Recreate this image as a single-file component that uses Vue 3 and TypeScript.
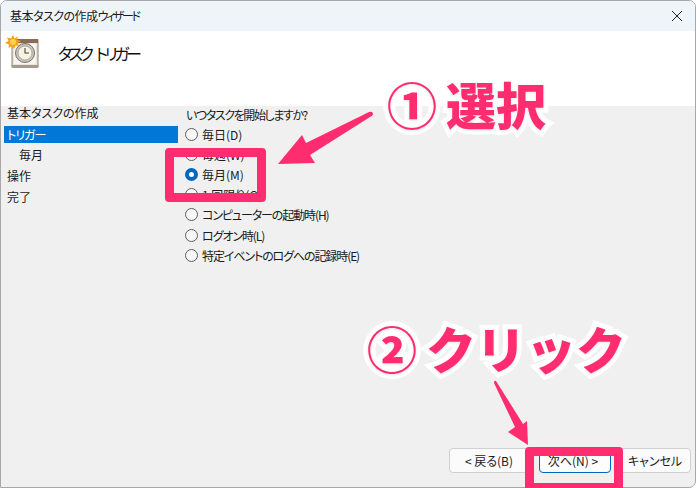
<script setup lang="ts">
const steps = [
  { label: '基本タスクの作成', cls: '' },
  { label: 'トリガー', cls: 'selected' },
  { label: '毎月', cls: 'sub' },
  { label: '操作', cls: '' },
  { label: '完了', cls: '' },
]
const options = [
  { label: '毎日(D)', checked: false, tight: false },
  { label: '毎週(W)', checked: false, tight: false },
  { label: '毎月(M)', checked: true, tight: false },
  { label: '1 回限り(O)', checked: false, tight: false },
  { label: 'コンピューターの起動時(H)', checked: false, tight: true },
  { label: 'ログオン時(L)', checked: false, tight: true },
  { label: '特定イベントのログへの記録時(E)', checked: false, tight: true },
]
</script>

<template>
  <div class="stage">
    <div class="window">
      <div class="titlebar">
        <span><span class="title-a">基本タスクの作成</span><span class="title-b">ウィザード</span></span>
        <svg class="close" width="12" height="12" viewBox="0 0 12 12">
          <path d="M1 1 L11 11 M11 1 L1 11" stroke="#222" stroke-width="1" fill="none" />
        </svg>
      </div>
      <div class="header">
        <svg class="task-icon" width="34" height="34" viewBox="0 0 34 34">
          <rect x="7" y="5" width="26" height="27" fill="#e9e4da" stroke="#8d8378" />
          <rect x="7" y="4" width="26" height="4" fill="#8b6a58" />
          <rect x="9" y="9" width="22" height="20" fill="#f8f6f0" />
          <path d="M6 30 H33 V33 H8 Z" fill="#a39a8e" />
          <circle cx="20" cy="18" r="9.5" fill="#c9c5bb" stroke="#77736c" />
          <circle cx="20" cy="18" r="7" fill="#f6f3e2" stroke="#9a958a" stroke-width=".7" />
          <path d="M20 13 V18 H24" stroke="#444" stroke-width="1.1" fill="none" />
          <path d="M8 0 L9.5 3.5 L13 1.5 L12 5 L16 6 L12.5 8 L14.5 11 L10.5 10.5 L9 14 L7 11 L3.5 13 L4 9.5 L0 8 L3.5 6 L2 2.5 L6 3.5 Z" fill="#f6a21a" />
          <circle cx="8" cy="7" r="3" fill="#fdd34d" />
        </svg>
        <span class="heading">タスク トリガー</span>
      </div>
      <div class="content">
        <ul class="steps">
          <li v-for="s in steps" :key="s.label" :class="s.cls">{{ s.label }}</li>
        </ul>
        <div class="form">
          <p class="question">いつタスクを開始しますか?</p>
          <label v-for="o in options" :key="o.label" class="option">
            <span class="radio" :class="{ on: o.checked }"></span>
            <span :class="{ tight: o.tight }">{{ o.label }}</span>
          </label>
        </div>
      </div>
      <div class="footer">
        <button class="btn back">&lt; 戻る(B)</button>
        <button class="btn primary">次へ(N) &gt;</button>
        <button class="btn cancel">キャンセル</button>
      </div>
    </div>

    <div class="hl hl-one"></div>
    <div class="hl hl-two"></div>
    <svg class="arrows" width="696" height="488" viewBox="0 0 696 488">
      <path d="M278 164 L302 135 L306 143 L369 112 Q373 111 373 114 Q373 116 370 117 L310 155 L315 163 Z" fill="#ff2d6f" />
      <path d="M528 445 L508 432 L515 427 L494 383 Q494 380 496 381 L523 424 L527 421 Z" fill="#ff2d6f" />
    </svg>
    <div class="note note-one"><span class="digit">①</span>選択</div>
    <div class="note note-two"><span class="digit">②</span>クリック</div>
  </div>
</template>

<style scoped>
.stage {
  position: relative;
  width: 696px;
  height: 488px;
  overflow: hidden;
  background: #fff;
  font-family: "Noto Sans CJK JP", "Noto Sans", sans-serif;
  font-size: 12px;
  font-feature-settings: "palt";
  color: #1a1a1a;
}
.window {
  box-sizing: border-box;
  width: 696px;
  height: 488px;
  display: flex;
  flex-direction: column;
  border: 1px solid #a8a8a8;
  border-radius: 7px 7px 7px 0;
  overflow: hidden;
  background: #f0f0f0;
}
.titlebar {
  height: 30px;
  flex: none;
  display: flex;
  align-items: center;
  justify-content: space-between;
  padding: 0 12px 0 9px;
  background: #eff4f9;
  line-height: 1;
}
.title-a { letter-spacing: -0.5px; }
.title-b { letter-spacing: -2.4px; }
.close { display: block; }
.header {
  height: 75px;
  flex: none;
  background: #fff;
  position: relative;
  display: flex;
  align-items: flex-start;
  padding: 4px 0 0 4px;
  box-sizing: border-box;
}
.task-icon { flex: none; }
.heading {
  margin: 6px 0 0 19px;
  font-size: 16px;
  line-height: 24px;
  color: #111;
  letter-spacing: -3.4px;
  word-spacing: 5px;
}
.content {
  flex: 1;
  display: flex;
  min-height: 0;
}
.steps {
  list-style: none;
  margin: 0;
  padding: 0 0 0 3px;
  width: 174px;
  flex: none;
}
.steps li {
  height: 17px;
  line-height: 17px;
  margin-bottom: 4px;
  padding-left: 3px;
  white-space: nowrap;
}
.steps li:first-child { margin-top: -2px; margin-bottom: 5px; }
.steps li.selected {
  background: #0078d7;
  color: #fff;
  letter-spacing: -1px;
  margin-bottom: 3px;
}
.steps li.sub { padding-left: 15px; }
.form {
  margin-left: 8px;
  display: flex;
  flex-direction: column;
}
.question {
  margin: 0 0 1px;
  height: 17px;
  line-height: 17px;
  white-space: nowrap;
  letter-spacing: -1.4px;
}
.option {
  display: flex;
  align-items: center;
  height: 20.2px;
  gap: 4px;
  white-space: nowrap;
}
.tight { letter-spacing: -1.1px; }
.radio {
  box-sizing: border-box;
  width: 13px;
  height: 13px;
  flex: none;
  border: 1px solid #5e5e5e;
  border-radius: 50%;
  background: #f6f6f6;
  margin-left: -1px;
}
.radio.on {
  border: 4px solid #0067c0;
  background: #fff;
}
.footer {
  flex: none;
  height: 39px;
  display: flex;
  align-items: flex-start;
  padding-left: 448px;
  box-sizing: border-box;
}
.btn {
  box-sizing: border-box;
  height: 25px;
  padding: 0;
  font: inherit;
  font-feature-settings: "palt";
  line-height: 1;
  color: #1a1a1a;
  background: #fbfbfb;
  border: 1px solid #d0d0d0;
  border-radius: 4px;
}
.back { width: 80px; margin-right: 10px; }
.primary { width: 72px; margin-right: 8px; padding-right: 4px; border-color: #0067c0; background: #fdfdfd; }
.cancel { width: 72px; }
.hl {
  position: absolute;
  box-sizing: border-box;
  border: 9px solid #ff2d6f;
  border-radius: 4px;
}
.hl-one { left: 165px; top: 148px; width: 101px; height: 54px; }
.hl-two { left: 525px; top: 447px; width: 98px; height: 45px; }
.arrows { position: absolute; left: 0; top: 0; }
.note {
  position: absolute;
  font-family: "Noto Sans CJK JP", sans-serif;
  font-weight: 900;
  font-size: 50px;
  line-height: 1;
  color: #ff2d6f;
  white-space: nowrap;
  font-feature-settings: normal;
  -webkit-text-stroke: 10px #fff;
  paint-order: stroke fill;
  text-shadow: 0 1px 3px rgba(0, 0, 0, 0.12);
}
.digit { margin-right: 9px; }
.note-one { left: 387px; top: 78px; }
.note-two { left: 367px; top: 322px; }
</style>
